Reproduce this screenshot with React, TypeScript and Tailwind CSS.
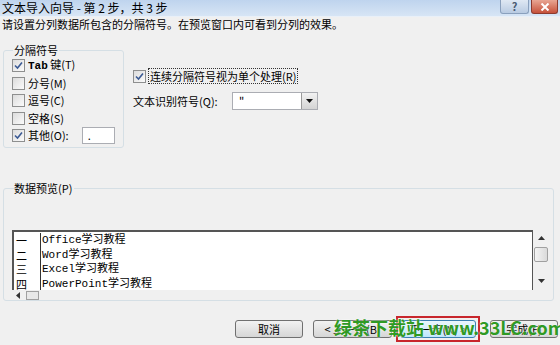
import React from "react";

const ui = { fontFamily: '"Noto Sans CJK SC", "Noto Sans", sans-serif' };
const mono = { fontFamily: '"Liberation Mono", "Noto Sans CJK SC", monospace' };

function Check({ on }: { on?: boolean }) {
  return (
    <span className="w-[13px] h-[13px] shrink-0 border border-[#8e8f8f] bg-gradient-to-br from-[#dcdcdc] to-[#fbfbfb] flex items-center justify-center">
      {on && (
        <svg width="9" height="9" viewBox="0 0 9 9">
          <path d="M1 4.5 L3.5 7 L8 1.5" fill="none" stroke="#3b5a94" strokeWidth="1.6" />
        </svg>
      )}
    </span>
  );
}

function Btn({ label, active }: { label: string; active?: boolean }) {
  return (
    <div
      className={
        "h-[18px] flex items-center justify-center rounded-[3px] border text-[11px] text-black " +
        (active
          ? "w-[76px] border-[#3c7fb1] bg-gradient-to-b from-[#eaf6fd] to-[#bee6fd]"
          : "w-[68px] border-[#707070] bg-gradient-to-b from-[#f2f2f2] to-[#d6d6d6]")
      }
    >
      {label}
    </div>
  );
}

const rows = [
  ["一", "Office学习教程"],
  ["二", "Word学习教程"],
  ["三", "Excel学习教程"],
  ["四", "PowerPoint学习教程"],
];

export default function App() {
  return (
    <div className="w-[560px] h-[345px] bg-[#f0f0f0] relative overflow-hidden flex flex-col text-black" style={ui}>
      {/* title bar */}
      <div className="h-[17px] shrink-0 flex items-start justify-between pl-[2px] pr-[2px] bg-gradient-to-b from-[#bfd4ee] to-[#d7e5f5] border-b border-[#e9f0f8]">
        <span className="text-[12px] leading-[16px]">文本导入向导 - 第 2 步，共 3 步</span>
        <div className="flex gap-[2px]">
          <div className="w-[29px] h-[14px] rounded-b-[3px] border border-t-0 border-[#8aa0bd] bg-gradient-to-b from-[#dfe8f3] to-[#b9cbe2] flex items-center justify-center text-[11px] leading-none text-[#4a5a72] font-bold">
            ?
          </div>
          <div className="w-[27px] h-[14px] rounded-b-[3px] border border-t-0 border-[#8d3a2e] bg-gradient-to-b from-[#e8a593] to-[#c5503a] flex items-center justify-center">
            <svg width="10" height="8" viewBox="0 0 10 8">
              <path d="M1.5 0.5 L8.5 7.5 M8.5 0.5 L1.5 7.5" stroke="#fff" strokeWidth="2" />
            </svg>
          </div>
        </div>
      </div>

      {/* instruction */}
      <div className="h-[15px] shrink-0 pl-[2px] text-[11px] leading-[15px]">
        请设置分列数据所包含的分隔符号。在预览窗口内可看到分列的效果。
      </div>

      {/* delimiter options */}
      <div className="flex shrink-0 mt-[11px] pl-[3px]">
        <fieldset className="w-[121px] h-[105px] border border-[#d5dfe5] rounded-[3px] pl-[8px] pt-[2px]">
          <legend className="text-[11px] leading-[14px] px-[1px] ml-[1px]">分隔符号</legend>
          <div className="flex flex-col gap-[4.5px] text-[11px] leading-[13px]">
            <label className="h-[13px] flex items-center gap-[3px]">
              <Check on />
              <span>
                <span style={mono} className="font-bold">Tab</span> 键(T)
              </span>
            </label>
            <label className="h-[13px] flex items-center gap-[3px]">
              <Check />
              <span>分号(M)</span>
            </label>
            <label className="h-[13px] flex items-center gap-[3px]">
              <Check />
              <span>逗号(C)</span>
            </label>
            <label className="h-[13px] flex items-center gap-[3px]">
              <Check />
              <span>空格(S)</span>
            </label>
            <label className="h-[13px] flex items-center gap-[3px]">
              <Check on />
              <span>其他(O):</span>
              <span className="ml-[10px] w-[33px] h-[17px] bg-white border border-[#abadb3] text-[11px] leading-[14px] pl-[5px]">.</span>
            </label>
          </div>
        </fieldset>

        <div className="flex flex-col pl-[9px] pt-[26px] text-[11px]">
          <label className="flex items-center gap-[3px]">
            <Check on />
            <span className="outline outline-1 outline-dotted outline-[#333] px-[1px] leading-[14px]">
              连续分隔符号视为单个处理(R)
            </span>
          </label>
          <div className="flex items-center mt-[9px]">
            <span className="w-[99px] leading-[14px]">文本识别符号(Q):</span>
            <div className="w-[86px] h-[18px] bg-white border border-[#abadb3] flex items-stretch">
              <span className="flex-1 pl-[6px] leading-[14px]">"</span>
              <span className="w-[16px] border-l border-[#9a9a9a] bg-gradient-to-b from-[#f2f2f2] to-[#d4d4d4] flex items-center justify-center">
                <svg width="7" height="4" viewBox="0 0 7 4">
                  <path d="M0 0 L7 0 L3.5 4 Z" fill="#111" />
                </svg>
              </span>
            </div>
          </div>
        </div>
      </div>

      {/* preview */}
      <fieldset className="shrink-0 mt-[33px] ml-[3px] w-[551px] h-[120px] border border-[#d5dfe5] rounded-[3px] pl-[8px]">
        <legend className="text-[11px] leading-[14px] ml-[2px] pr-[2px]">数据预览(P)</legend>
        <div className="flex mt-[35px]">
          <div className="w-[521px] h-[60px] bg-white border-l-2 border-t-2 border-r border-[#555] overflow-hidden text-[11px] leading-[14.5px] pt-[1px]">
            {rows.map(([n, t]) => (
              <div key={n} className="flex">
                <span className="w-[27px] pl-[2px] border-r border-[#333]">{n}</span>
                <span style={mono} className="pl-[1px]">{t}</span>
              </div>
            ))}
          </div>
          <div className="w-[16px] h-[60px] flex flex-col items-center pt-[6px]">
            <svg width="7" height="4" viewBox="0 0 7 4">
              <path d="M0 4 L7 4 L3.5 0 Z" fill="#333" />
            </svg>
            <div className="mt-[7px] w-[14px] h-[15px] border border-[#a0a0a0] rounded-[2px] bg-gradient-to-r from-[#f4f4f4] to-[#dadada]" />
            <div className="flex-1" />
            <svg width="7" height="4" viewBox="0 0 7 4" className="mb-[7px]">
              <path d="M0 0 L7 0 L3.5 4 Z" fill="#333" />
            </svg>
          </div>
        </div>
        <div className="flex items-center gap-[6px] pl-[4px] h-[10px]">
          <svg width="4" height="7" viewBox="0 0 4 7">
            <path d="M4 0 L4 7 L0 3.5 Z" fill="#333" />
          </svg>
          <div className="w-[13px] h-[9px] border border-[#a0a0a0] bg-[#e8e8e8]" />
        </div>
      </fieldset>

      {/* buttons */}
      <div className="flex shrink-0 items-center mt-[19px] pl-[235px] gap-[10px]">
        <Btn label="取消" />
        <div className="w-[79px] h-[18px] flex items-center justify-center rounded-[3px] border border-[#707070] bg-gradient-to-b from-[#f2f2f2] to-[#d6d6d6] text-[11px]">
          &lt; 上一步(B)
        </div>
        <div className="p-[2px] border-2 border-[#c8262c] -ml-[6px] -my-[4px]">
          <Btn label="下一步(N) >" active />
        </div>
        <Btn label="完成(F)" />
      </div>

      {/* watermark overlay */}
      <div
        className="absolute left-[334px] top-[316px] text-[18px] leading-[22px] font-bold text-[#2f9a24] whitespace-nowrap"
        style={{ fontFamily: '"Noto Sans CJK SC", "Liberation Sans", sans-serif', textShadow: "0 0 2px #fff" }}
      >
        绿茶下载站 www.33LC.com
      </div>
    </div>
  );
}
